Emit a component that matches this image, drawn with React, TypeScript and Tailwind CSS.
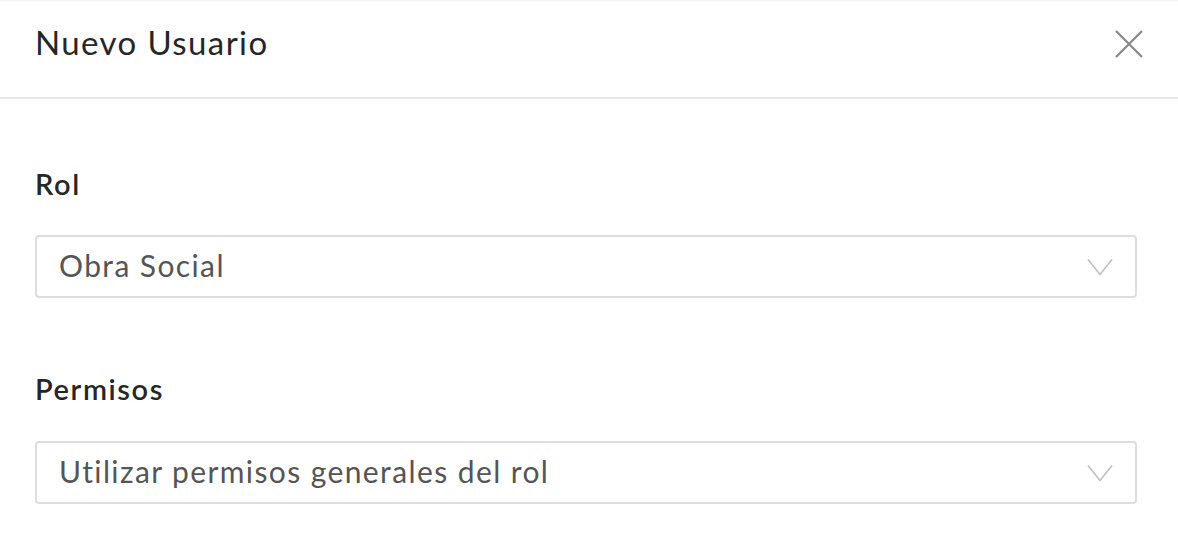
import React from "react";

function Chevron() {
  return (
    <svg width="26" height="18" viewBox="0 0 26 18" fill="none" className="shrink-0">
      <path d="M1 1.5 L13 16.5 L25 1.5" stroke="#bfbfbf" strokeWidth="1.6" />
    </svg>
  );
}

function Select({ value }: { value: string }) {
  return (
    <div className="flex h-[63px] items-center justify-between rounded-[4px] border-2 border-[#dddddd] bg-white pl-[22px] pr-[22px]">
      <span className="pb-[3px] text-[30px] leading-[40px] tracking-[1.4px] text-[#555555]">{value}</span>
      <Chevron />
    </div>
  );
}

export default function App() {
  return (
    <div
      className="h-[542px] w-[1178px] overflow-hidden bg-white"
      style={{ fontFamily: "Lato, 'Open Sans', sans-serif" }}
    >
      <div className="flex h-[99px] items-start justify-between border-t border-b-2 border-t-[#f2f2f2] border-b-[#e6e6e6] pl-[35px] pr-[35px] pt-[21px]">
        <h1 className="text-[33px] font-normal leading-[40px] tracking-[1.4px] text-[#262626]">Nuevo Usuario</h1>
        <svg width="28" height="28" viewBox="0 0 28 28" fill="none" className="mt-[8px]">
          <path d="M1 1 L27 27 M27 1 L1 27" stroke="#8a8a8a" strokeWidth="2.3" />
        </svg>
      </div>
      <div className="flex flex-col pl-[35px] pr-[41px] pt-[67px]">
        <label className="text-[29px] font-semibold leading-[36px] tracking-[1.6px] text-[#262626]">Rol</label>
        <div className="mt-[33px]">
          <Select value="Obra Social" />
        </div>
        <label className="mt-[73px] text-[29px] font-semibold leading-[36px] tracking-[1.6px] text-[#262626]">Permisos</label>
        <div className="mt-[34px]">
          <Select value="Utilizar permisos generales del rol" />
        </div>
      </div>
    </div>
  );
}
